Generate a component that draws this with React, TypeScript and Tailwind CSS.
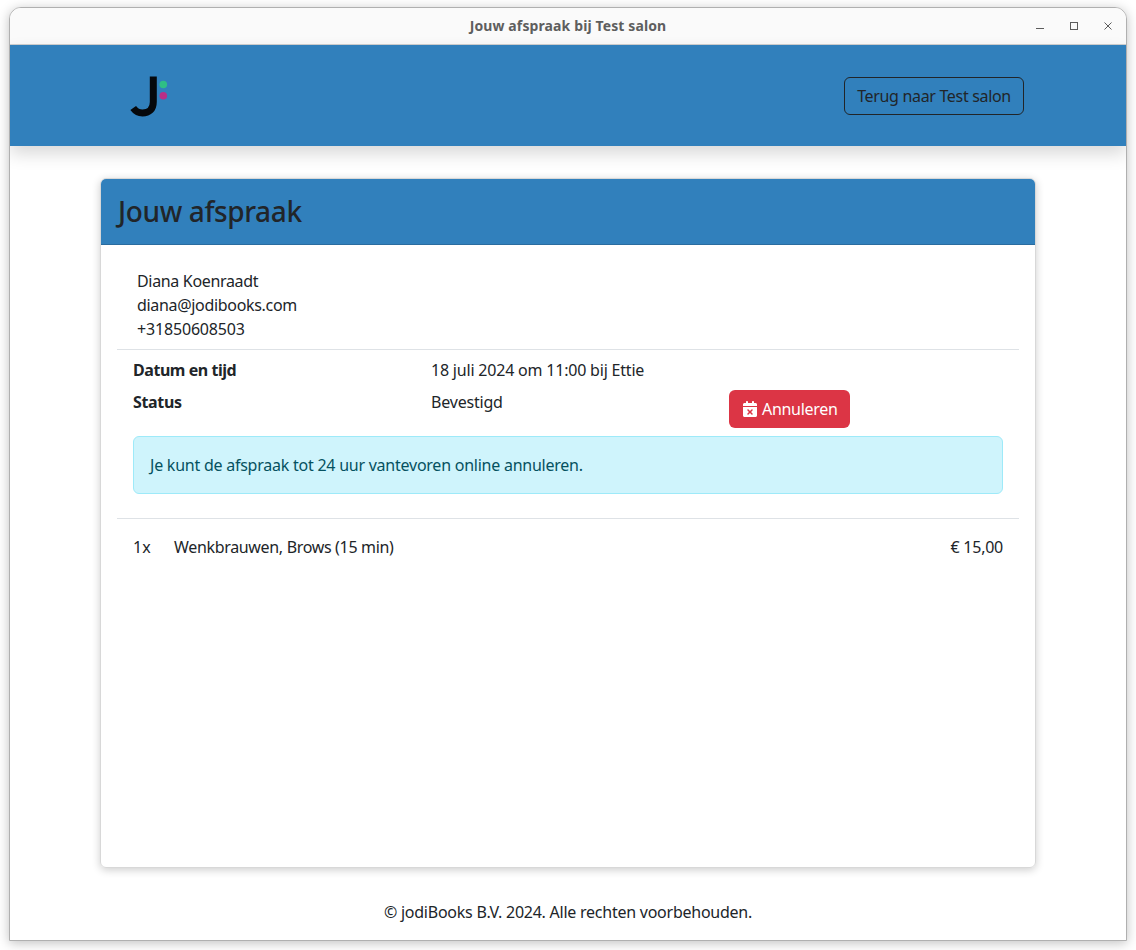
import React from 'react';

const Logo = () => (
  <svg width="44" height="42" viewBox="0 0 44 42" fill="none">
    <path d="M27.300 1.500V27C27.300 34.500 22.800 38 16.500 38C12.500 38 9.500 36.200 7.200 33" stroke="#05080c" strokeWidth="7" />
    <circle cx="37.300" cy="9.500" r="3.800" fill="#2fbf85" />
    <circle cx="37.300" cy="20.800" r="3.800" fill="#b82f87" />
  </svg>
);

const CalendarX = () => (
  <svg width="14" height="16" viewBox="0 0 448 512" fill="#fff">
    <path d="M128 0c17.700 0 32 14.300 32 32V64H288V32c0-17.700 14.300-32 32-32s32 14.300 32 32V64h48c26.500 0 48 21.500 48 48v48H0V112C0 85.500 21.500 64 48 64H96V32c0-17.700 14.300-32 32-32zM0 192H448V464c0 26.500-21.500 48-48 48H48c-26.500 0-48-21.500-48-48V192zM305 305c9.400-9.400 9.400-24.600 0-33.900s-24.600-9.400-33.900 0l-47 47-47-47c-9.400-9.400-24.600-9.400-33.900 0s-9.400 24.600 0 33.900l47 47-47 47c-9.400 9.400-9.400 24.600 0 33.900s24.600 9.400 33.900 0l47-47 47 47c9.400 9.400 24.600 9.400 33.900 0s9.400-24.600 0-33.900l-47-47 47-47z" />
  </svg>
);

const WindowControls = () => (
  <div className="absolute left-[1026px] top-[14px] flex gap-[26px]">
    <svg width="8" height="8" viewBox="0 0 8 8" fill="none" stroke="#5c5c5c">
      <path d="M0 6.500H8" />
    </svg>
    <svg width="8" height="8" viewBox="0 0 8 8" fill="none" stroke="#5c5c5c">
      <rect x="0.500" y="0.500" width="7" height="7" />
    </svg>
    <svg width="8" height="8" viewBox="0 0 8 8" fill="none" stroke="#5c5c5c">
      <path d="M0.500 0.500L7.500 7.500M7.500 0.500L0.500 7.500" />
    </svg>
  </div>
);

const App = () => {
  return (
    <div className="w-[1136px] h-[950px] bg-white pt-[7px] pl-[9px] overflow-hidden font-['Noto_Sans',sans-serif] text-[16px] leading-[24px] text-[#212529]">
      <div className="w-[1118px] h-[934px] border border-[#b0b0b0] rounded-t-[12px] bg-white shadow-[0_2px_12px_rgba(0,0,0,0.25)] overflow-hidden flex flex-col">
        <div className="h-[37px] shrink-0 bg-[#fafafa] border-b border-[#d0d0d0] relative flex items-center justify-center">
          <span className="text-[14px] font-bold text-[#5e5e5e] tracking-[0.12px]">Jouw afspraak bij Test salon</span>
          <WindowControls />
        </div>

        <header className="h-[101px] shrink-0 bg-[#3180bc] shadow-[0_8px_16px_rgba(0,0,0,0.15)] flex items-center justify-between pl-[116px] pr-[102px] relative">
          <Logo />
          <a className="h-[38px] w-[180px] border border-[#212529] rounded-[6px] flex items-center justify-center tracking-[-0.33px]">Terug naar Test salon</a>
        </header>

        <main className="flex-1 flex flex-col items-center pt-[32px]">
          <section className="w-[936px] h-[690px] rounded-[6px] border border-[#d8d8d8] shadow-[0_2px_8px_rgba(0,0,0,0.2)] overflow-hidden flex flex-col">
            <div className="h-[66px] shrink-0 bg-[#3180bc] border-b border-[#2a6c9f] pl-[17px] pr-[16px] flex items-center">
              <h1 className="text-[28px] font-medium leading-[34px] tracking-[-0.38px] mt-[-2px]">Jouw afspraak</h1>
            </div>
            <div className="px-[16px] pt-[24px]">
              <div className="pl-[20px] pb-[8px] border-b border-[#dee2e6]">
                <div className="tracking-[-0.33px]">Diana Koenraadt</div>
                <div className="tracking-[-0.32px]">diana@jodibooks.com</div>
                <div className="tracking-[-0.17px]">+31850608503</div>
              </div>
              <div className="px-[16px] pt-[8px]">
                <div className="grid grid-cols-[298px_298px_1fr]">
                  <div className="font-bold h-[32px] tracking-[-0.45px]">Datum en tijd</div>
                  <div className="tracking-[-0.2px]">18 juli 2024 om 11:00 bij Ettie</div>
                  <div />
                  <div className="font-bold tracking-[-0.35px]">Status</div>
                  <div className="tracking-[-0.2px]">Bevestigd</div>
                  <div>
                    <button className="h-[38px] w-[121px] pl-[14px] bg-[#dc3545] text-white rounded-[6px] flex items-center gap-[5px] tracking-[-0.3px]">
                      <CalendarX />
                      Annuleren
                    </button>
                  </div>
                </div>
                <div className="mt-[8px] h-[58px] rounded-[6px] border border-[#9eeaf9] bg-[#cff4fc] text-[#055160] px-[16px] flex items-center tracking-[-0.24px]">
                  Je kunt de afspraak tot 24 uur vantevoren online annuleren.
                </div>
              </div>
              <div className="mt-[24px] border-t border-[#dee2e6] px-[16px] pt-[16px] flex">
                <div className="w-[41px]">1x</div>
                <div className="flex-1 tracking-[-0.33px]">Wenkbrauwen, Brows (15 min)</div>
                <div className="tracking-[-0.25px]">€ 15,00</div>
              </div>
            </div>
          </section>
          <footer className="mt-[32px] text-center tracking-[-0.245px]">© jodiBooks B.V. 2024. Alle rechten voorbehouden.</footer>
        </main>
      </div>
    </div>
  );
};

export default App;
